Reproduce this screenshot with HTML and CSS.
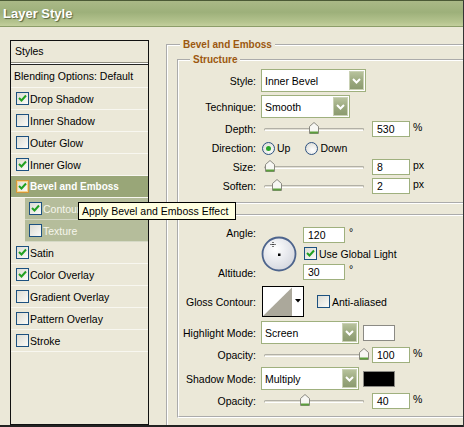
FILE: index.html
```html
<!DOCTYPE html>
<html lang="en">
<head>
    <meta charset="UTF-8">
    <title>Layer Style</title>
    <link rel="stylesheet" href="styles.css">
</head>
<body>
<div class="window">
    <div class="titlebar">Layer Style</div>

    <div class="main">
        <!-- left: list of effects -->
        <div class="styles-panel">
            <div class="styles-head">Styles</div>
            <div class="blend-row">Blending Options: Default</div>
            <ul class="effects">
                <li><span class="cb on"><svg viewBox="0 0 11 11"><path d="M2 5l2.5 2.5L9 2.5"/></svg></span>Drop Shadow</li>
                <li><span class="cb"></span>Inner Shadow</li>
                <li><span class="cb"></span>Outer Glow</li>
                <li><span class="cb on"><svg viewBox="0 0 11 11"><path d="M2 5l2.5 2.5L9 2.5"/></svg></span>Inner Glow</li>
                <li class="active"><span class="cb on"><svg viewBox="0 0 11 11"><path d="M2 5l2.5 2.5L9 2.5"/></svg></span>Bevel and Emboss</li>
                <li class="sub"><span class="cb on"><svg viewBox="0 0 11 11"><path d="M2 5l2.5 2.5L9 2.5"/></svg></span>Contour</li>
                <li class="sub"><span class="cb"></span>Texture</li>
                <li><span class="cb on"><svg viewBox="0 0 11 11"><path d="M2 5l2.5 2.5L9 2.5"/></svg></span>Satin</li>
                <li><span class="cb on"><svg viewBox="0 0 11 11"><path d="M2 5l2.5 2.5L9 2.5"/></svg></span>Color Overlay</li>
                <li><span class="cb"></span>Gradient Overlay</li>
                <li><span class="cb"></span>Pattern Overlay</li>
                <li><span class="cb"></span>Stroke</li>
            </ul>
        </div>

        <!-- right: settings -->
        <div class="settings">
            <fieldset class="group outer">
                <legend>Bevel and Emboss</legend>

                <fieldset class="group structure">
                    <legend>Structure</legend>

                    <div class="row tall first">
                        <span class="lbl">Style:</span>
                        <div class="select w-style"><span>Inner Bevel</span><span class="arrow"><svg width="9" height="6"><path d="M1 1l3.5 3.5L8 1"/></svg></span></div>
                    </div>
                    <div class="row tall">
                        <span class="lbl">Technique:</span>
                        <div class="select w-tech"><span>Smooth</span><span class="arrow"><svg width="9" height="6"><path d="M1 1l3.5 3.5L8 1"/></svg></span></div>
                    </div>
                    <div class="row">
                        <span class="lbl">Depth:</span>
                        <div class="slider"><span class="track"></span><svg class="thumb" style="left: 48px" width="10" height="12" viewBox="0 0 10 12"><path d="M0.5 4.5L5 0.5l4.5 4V11.5h-9z"/><rect x="1" y="9.5" width="8" height="2"/></svg></div>
                        <div class="num">530</div><span class="unit">%</span>
                    </div>
                    <div class="row">
                        <span class="lbl">Direction:</span>
                        <span class="radio on"></span><span>Up</span>
                        <span class="radio gap"></span><span>Down</span>
                    </div>
                    <div class="row">
                        <span class="lbl">Size:</span>
                        <div class="slider"><span class="track"></span><svg class="thumb" style="left: 4px" width="10" height="12" viewBox="0 0 10 12"><path d="M0.5 4.5L5 0.5l4.5 4V11.5h-9z"/><rect x="1" y="9.5" width="8" height="2"/></svg></div>
                        <div class="num">8</div><span class="unit">px</span>
                    </div>
                    <div class="row">
                        <span class="lbl">Soften:</span>
                        <div class="slider"><span class="track"></span><svg class="thumb" style="left: 11px" width="10" height="12" viewBox="0 0 10 12"><path d="M0.5 4.5L5 0.5l4.5 4V11.5h-9z"/><rect x="1" y="9.5" width="8" height="2"/></svg></div>
                        <div class="num">2</div><span class="unit">px</span>
                    </div>
                </fieldset>

                <fieldset class="group shading">
                    <legend>Shading</legend>

                    <div class="angle-grid">
                        <span class="lbl a1">Angle:</span>
                        <svg class="dial" width="36" height="36" viewBox="0 0 36 36">
                            <defs>
                                <radialGradient id="dialFill" cx="40%" cy="35%" r="70%">
                                    <stop offset="0" stop-color="#ffffff"/>
                                    <stop offset="1" stop-color="#d3d6de"/>
                                </radialGradient>
                            </defs>
                            <circle cx="18" cy="18" r="16.5" fill="url(#dialFill)" stroke="#4d648c" stroke-width="1.8"/>
                            <path d="M12 6v5M9.5 8.5h5" stroke="#000" stroke-width="1" stroke-dasharray="1 1"/>
                            <rect x="17" y="17.5" width="2.5" height="2.5" fill="#000"/>
                        </svg>
                        <div class="cell a1"><div class="num small">120</div><span class="deg">°</span></div>
                        <div class="cell a2"><span class="cb on"><svg viewBox="0 0 11 11"><path d="M2 5l2.5 2.5L9 2.5"/></svg></span>Use Global Light</div>
                        <span class="lbl a3">Altitude:</span>
                        <div class="cell a3"><div class="num small">30</div><span class="deg">°</span></div>
                    </div>

                    <div class="row gloss">
                        <span class="lbl">Gloss Contour:</span>
                        <svg class="contour" width="42" height="31" viewBox="0 0 42 31">
                            <rect x="0.5" y="0.5" width="41" height="30" fill="#fff" stroke="#000"/>
                            <polygon points="1,30 30,1.5 30,30" fill="#aba89b"/>
                            <polygon points="33,13 39,13 36,16.5" fill="#000"/>
                        </svg>
                        <span class="cb aa"></span><span>Anti-aliased</span>
                    </div>
                    <div class="row tall m4">
                        <span class="lbl">Highlight Mode:</span>
                        <div class="select w-mode"><span>Screen</span><span class="arrow"><svg width="9" height="6"><path d="M1 1l3.5 3.5L8 1"/></svg></span></div>
                        <span class="swatch white"></span>
                    </div>
                    <div class="row">
                        <span class="lbl">Opacity:</span>
                        <div class="slider"><span class="track"></span><svg class="thumb" style="left: 98px" width="10" height="12" viewBox="0 0 10 12"><path d="M0.5 4.5L5 0.5l4.5 4V11.5h-9z"/><rect x="1" y="9.5" width="8" height="2"/></svg></div>
                        <div class="num">100</div><span class="unit">%</span>
                    </div>
                    <div class="row tall m4">
                        <span class="lbl">Shadow Mode:</span>
                        <div class="select w-mode"><span>Multiply</span><span class="arrow"><svg width="9" height="6"><path d="M1 1l3.5 3.5L8 1"/></svg></span></div>
                        <span class="swatch black"></span>
                    </div>
                    <div class="row">
                        <span class="lbl">Opacity:</span>
                        <div class="slider"><span class="track"></span><svg class="thumb" style="left: 39px" width="10" height="12" viewBox="0 0 10 12"><path d="M0.5 4.5L5 0.5l4.5 4V11.5h-9z"/><rect x="1" y="9.5" width="8" height="2"/></svg></div>
                        <div class="num">40</div><span class="unit">%</span>
                    </div>
                </fieldset>
            </fieldset>
        </div>
    </div>

    <div class="tooltip">Apply Bevel and Emboss Effect</div>
</div>
</body>
</html>
```

FILE: styles.css
```css
* {
    box-sizing: border-box;
}

body {
    margin: 0;
    font-family: "Liberation Sans", Arial, sans-serif;
    font-size: 10.5px;
    color: #000;
    background: #ebe8d8;
}

.window {
    position: relative;
    width: 464px;
    height: 427px;
    overflow: hidden;
    background: #ebe8d8;
    border-top: 1px solid #4b5a36;
    border-right: 1px solid #333;
}

.titlebar {
    height: 26px;
    padding-left: 3px;
    line-height: 25px;
    font-size: 13px;
    font-weight: bold;
    color: #fff;
    text-shadow: 1px 1px 1px #56633f;
    background: linear-gradient(#aab987, #9db07a 45%, #b5c48f 85%, #c3cf9d);
    border-bottom: 1px solid #8c9d69;
}

.main {
    display: flex;
    align-items: flex-start;
    height: 400px;
    padding: 13px 0 0 10px;
    overflow: hidden;
    border-bottom: 2px solid #222;
}

/* left list */

.styles-panel {
    flex: none;
    width: 139px;
    height: 385px;
    border: 1px solid #111;
}

.styles-head {
    height: 22px;
    line-height: 21px;
    padding-left: 4px;
    border-bottom: 1px solid #8f8d80;
    box-shadow: 0 1px 0 #fff;
}

.blend-row {
    margin-top: 1px;
    height: 24px;
    line-height: 22px;
    padding-left: 3px;
    border-top: 1px solid #222;
    border-bottom: 1px solid #f8f7f0;
}

.effects {
    list-style: none;
    margin: 0;
    padding: 0;
}

.effects li {
    display: flex;
    align-items: center;
    height: 22px;
    padding-left: 5px;
    border-bottom: 1px solid #f8f7f0;
}

.effects li.active {
    background: #99a678;
    color: #fff;
    font-weight: bold;
    font-size: 10px;
}

.effects li.sub {
    margin-left: 14px;
    padding-left: 4px;
    background: #b5bd9b;
    color: #f6f6ec;
    border-bottom-color: #d5d9c6;
}

.cb {
    flex: none;
    display: flex;
    align-items: center;
    justify-content: center;
    width: 13px;
    height: 13px;
    margin-right: 1px;
    border: 1px solid #1c5180;
    background: linear-gradient(135deg, #dcdcd4, #fbfbf8);
}

.cb svg {
    width: 11px;
    height: 11px;
}

.cb path {
    fill: none;
    stroke: #21a121;
    stroke-width: 2;
}

.active .cb {
    border-color: #d4993a;
    box-shadow: inset 0 0 0 1px #f6d58e;
}

/* right settings */

.settings {
    flex: 1;
    margin-left: 17px;
    margin-top: -1px;
    margin-right: -60px;
}

.group {
    margin: 0;
    min-width: 0;
    border: 2px groove #fff;
}

.group legend {
    padding: 0 3px;
    font-size: 10px;
    font-weight: bold;
    line-height: 12px;
    color: #9c5810;
}

.outer {
    padding: 0 0 30px 9px;
}

.outer > legend {
    margin-left: 3px;
}

.structure {
    margin-top: 3px;
    padding: 3px 0 8px 0;
}

.shading {
    margin-top: 5px;
    padding: 6px 0 7px 0;
}

.structure > legend,
.shading > legend {
    margin-left: 11px;
}

.row {
    display: flex;
    align-items: center;
    height: 16px;
    margin-top: 3px;
}

.row.first {
    margin-top: 0;
}

.row.tall {
    height: 23px;
}

.row.m4 {
    margin-top: 4px;
}

.lbl {
    flex: none;
    width: 77px;
    margin-right: 5px;
    text-align: right;
}

.select {
    display: flex;
    align-items: center;
    justify-content: space-between;
    height: 23px;
    padding-left: 3px;
    background: #fff;
    border: 1px solid #9fb07e;
}

.w-style {
    width: 105px;
}

.w-tech {
    width: 89px;
}

.w-mode {
    width: 98px;
}

.select .arrow {
    display: flex;
    align-items: center;
    justify-content: center;
    width: 15px;
    height: 19px;
    margin-right: 1px;
    background: linear-gradient(#b7c29c, #9aa87e 55%, #8c9b70);
    border: 1px solid #c9d1b4;
}

.select .arrow path {
    fill: none;
    stroke: #fff;
    stroke-width: 2;
}

.slider {
    position: relative;
    flex: none;
    width: 107px;
    height: 16px;
    margin-right: 4px;
}

.slider .track {
    position: absolute;
    left: 3px;
    right: 4px;
    top: 7px;
    height: 3px;
    background: #e2e0d6;
    border: 1px solid #b2b0a6;
    border-bottom-color: #fff;
    border-radius: 2px;
}

.thumb {
    position: absolute;
    top: 1px;
}

.thumb path {
    fill: #f7f7f3;
    stroke: #8a8980;
}

.thumb rect {
    fill: #5c9e3c;
}

.num {
    flex: none;
    width: 38px;
    height: 16px;
    padding-left: 4px;
    line-height: 14px;
    background: #fff;
    border: 1px solid #9fb07e;
}

.num.small {
    width: 42px;
}

.unit {
    margin-left: 3px;
    align-self: flex-start;
    line-height: 12px;
}

.radio {
    flex: none;
    width: 13px;
    height: 13px;
    margin: 0 2px 0 1px;
    border-radius: 50%;
    border: 1px solid #2d5282;
    background: radial-gradient(circle at 60% 65%, #fff, #d6d6cf);
    display: flex;
    align-items: center;
    justify-content: center;
}

.radio.on::after {
    content: "";
    width: 5px;
    height: 5px;
    border-radius: 50%;
    background: #2aa52a;
}

.radio.gap {
    margin-left: 15px;
}

/* angle / altitude */

.angle-grid {
    display: grid;
    grid-template-columns: 82px 42px auto;
    grid-template-rows: 16px 21px 16px;
    align-items: center;
}

.angle-grid .lbl {
    width: 82px;
    padding-right: 5px;
    margin: 0;
}

.a1 {
    grid-row: 1;
}

.a2 {
    grid-row: 2;
}

.a3 {
    grid-row: 3;
}

.lbl.a1 {
    align-self: start;
    line-height: 12px;
}

.lbl.a3 {
    align-self: end;
    line-height: 14px;
}

.dial {
    grid-column: 2;
    grid-row: 1 / 4;
}

.cell {
    grid-column: 3;
    display: flex;
    align-items: center;
}

.cell .cb {
    margin-left: 1px;
    margin-right: 2px;
}

.deg {
    margin-left: 4px;
    align-self: flex-start;
    line-height: 10px;
}

.row.gloss {
    height: 31px;
    margin-top: 6px;
}

.contour {
    flex: none;
    margin-left: 1px;
}

.cb.aa {
    margin-left: 13px;
    margin-right: 2px;
}

.swatch {
    flex: none;
    width: 32px;
    height: 16px;
    margin-left: 4px;
    border: 1px solid #8b8a84;
}

.swatch.white {
    background: #fff;
}

.swatch.black {
    background: #000;
}

/* tooltip lies over the list */

.tooltip {
    position: absolute;
    left: 78px;
    top: 201px;
    width: 158px;
    height: 18px;
    padding-left: 3px;
    line-height: 16px;
    background: #ffffe1;
    border: 1px solid #000;
}
```
